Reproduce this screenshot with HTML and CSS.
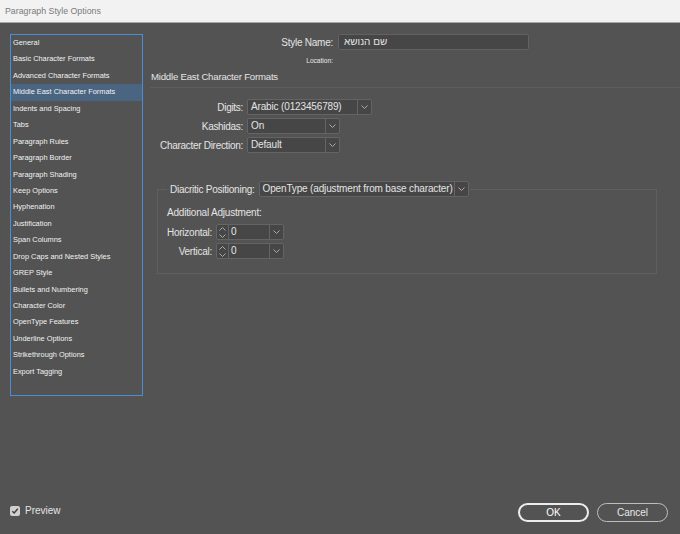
FILE: index.html
```html
<!DOCTYPE html>
<html lang="en">
<head>
  <meta charset="UTF-8">
  <title>Paragraph Style Options</title>
  <link rel="stylesheet" href="styles.css">
</head>
<body>
  <div class="titlebar">Paragraph Style Options</div>

  <div class="dialog">
    <ul class="sidebar">
      <li>General</li>
      <li>Basic Character Formats</li>
      <li>Advanced Character Formats</li>
      <li class="selected">Middle East Character Formats</li>
      <li>Indents and Spacing</li>
      <li>Tabs</li>
      <li>Paragraph Rules</li>
      <li>Paragraph Border</li>
      <li>Paragraph Shading</li>
      <li>Keep Options</li>
      <li>Hyphenation</li>
      <li>Justification</li>
      <li>Span Columns</li>
      <li>Drop Caps and Nested Styles</li>
      <li>GREP Style</li>
      <li>Bullets and Numbering</li>
      <li>Character Color</li>
      <li>OpenType Features</li>
      <li>Underline Options</li>
      <li>Strikethrough Options</li>
      <li>Export Tagging</li>
    </ul>

    <div class="panel">
      <div class="name-row">
        <span class="name-label">Style Name:</span>
        <div class="textfield" dir="rtl">שם הנושא</div>
      </div>
      <div class="location">Location:</div>

      <div class="section-title">Middle East Character Formats</div>

      <div class="fields">
        <div class="field">
          <span class="field-label">Digits:</span>
          <div class="select wide">
            <span class="select-value">Arabic (0123456789)</span>
            <span class="select-arrow"><svg width="7" height="4" viewBox="0 0 7 4"><polyline points="0.5,0.5 3.5,3.5 6.5,0.5" fill="none" stroke="#aaa" stroke-width="1"/></svg></span>
          </div>
        </div>
        <div class="field">
          <span class="field-label">Kashidas:</span>
          <div class="select">
            <span class="select-value">On</span>
            <span class="select-arrow"><svg width="7" height="4" viewBox="0 0 7 4"><polyline points="0.5,0.5 3.5,3.5 6.5,0.5" fill="none" stroke="#aaa" stroke-width="1"/></svg></span>
          </div>
        </div>
        <div class="field">
          <span class="field-label">Character Direction:</span>
          <div class="select">
            <span class="select-value">Default</span>
            <span class="select-arrow"><svg width="7" height="4" viewBox="0 0 7 4"><polyline points="0.5,0.5 3.5,3.5 6.5,0.5" fill="none" stroke="#aaa" stroke-width="1"/></svg></span>
          </div>
        </div>
      </div>

      <fieldset class="group">
        <legend class="group-legend">
          <span class="legend-label">Diacritic Positioning:</span>
          <div class="select diacritic">
            <span class="select-value">OpenType (adjustment from base character)</span>
            <span class="select-arrow"><svg width="7" height="4" viewBox="0 0 7 4"><polyline points="0.5,0.5 3.5,3.5 6.5,0.5" fill="none" stroke="#aaa" stroke-width="1"/></svg></span>
          </div>
        </legend>

        <div class="sub-title">Additional Adjustment:</div>

        <div class="spin-row">
          <span class="spin-label">Horizontal:</span>
          <div class="spinner">
            <span class="spin-arrows"><svg width="7" height="11" viewBox="0 0 7 11"><polyline points="0.5,3.5 3.5,0.5 6.5,3.5" fill="none" stroke="#aaa"/><polyline points="0.5,7.5 3.5,10.5 6.5,7.5" fill="none" stroke="#aaa"/></svg></span>
            <span class="spin-value">0</span>
            <span class="select-arrow"><svg width="7" height="4" viewBox="0 0 7 4"><polyline points="0.5,0.5 3.5,3.5 6.5,0.5" fill="none" stroke="#aaa" stroke-width="1"/></svg></span>
          </div>
        </div>
        <div class="spin-row">
          <span class="spin-label">Vertical:</span>
          <div class="spinner">
            <span class="spin-arrows"><svg width="7" height="11" viewBox="0 0 7 11"><polyline points="0.5,3.5 3.5,0.5 6.5,3.5" fill="none" stroke="#aaa"/><polyline points="0.5,7.5 3.5,10.5 6.5,7.5" fill="none" stroke="#aaa"/></svg></span>
            <span class="spin-value">0</span>
            <span class="select-arrow"><svg width="7" height="4" viewBox="0 0 7 4"><polyline points="0.5,0.5 3.5,3.5 6.5,0.5" fill="none" stroke="#aaa" stroke-width="1"/></svg></span>
          </div>
        </div>
      </fieldset>
    </div>
  </div>

  <div class="footer">
    <label class="preview">
      <span class="checkbox"><svg width="8" height="8" viewBox="0 0 8 8"><polyline points="1.3,4.2 3.2,6 6.8,1.8" fill="none" stroke="#3c3c3c" stroke-width="1.4"/></svg></span>
      Preview
    </label>
    <div class="buttons">
      <button class="btn primary">OK</button>
      <button class="btn">Cancel</button>
    </div>
  </div>
</body>
</html>
```

FILE: styles.css
```css
html, body {
  height: 100%;
}
body {
  margin: 0;
  background: #535353;
  color: #e4e4e4;
  font-family: "Liberation Sans", Arial, sans-serif;
  font-size: 10px;
  display: flex;
  flex-direction: column;
  overflow: hidden;
}
.titlebar {
  height: 22px;
  line-height: 22px;
  background: #f2f2f2;
  border-bottom: 1px solid #a9a9a9;
  color: #7a7a7a;
  font-size: 8.8px;
  padding-left: 5px;
  flex: none;
}
.dialog {
  display: flex;
  flex: 1;
  padding: 11px 0 0 10px;
}
.sidebar {
  list-style: none;
  margin: 0;
  padding: 0;
  width: 131px;
  height: 360px;
  border: 1px solid #4b8ed6;
  flex: none;
}
.sidebar li {
  height: 16.45px;
  line-height: 16.45px;
  padding-left: 2px;
  font-size: 7.4px;
  color: #f2f2f2;
  white-space: nowrap;
}
.sidebar li.selected {
  background: #4a6581;
}
.panel {
  flex: 1;
  margin-left: 7px;
}
.name-row {
  display: flex;
  align-items: center;
}
.name-label {
  width: 188px;
  text-align: right;
  padding-right: 5px;
  box-sizing: border-box;
  font-size: 10px;
  letter-spacing: -0.25px;
}
.textfield {
  width: 191px;
  height: 16px;
  box-sizing: border-box;
  background: #464646;
  border: 1px solid #626262;
  border-radius: 2px;
  line-height: 14px;
  padding: 0 5px;
  text-align: left;
  font-size: 10px;
}
.location {
  width: 188px;
  text-align: right;
  font-size: 6.6px;
  margin-top: 7px;
  padding-right: 5px;
  box-sizing: border-box;
  color: #e8e8e8;
}
.section-title {
  margin-top: 7px;
  padding: 0 0 5px 1px;
  border-bottom: 1px solid #5d5d5d;
  font-size: 9.6px;
  letter-spacing: -0.2px;
}
.fields {
  display: flex;
  flex-direction: column;
  gap: 3px;
  margin-top: 11px;
}
.field {
  display: flex;
  align-items: center;
  height: 16px;
}
.field-label {
  width: 97px;
  text-align: right;
  padding-right: 4px;
  box-sizing: border-box;
  letter-spacing: -0.3px;
}
.select {
  display: flex;
  width: 93px;
  height: 16px;
  box-sizing: border-box;
  background: #464646;
  border: 1px solid #646464;
  border-radius: 2px;
}
.select.wide {
  width: 125px;
}
.select.diacritic {
  width: 210px;
}
.select-value {
  flex: 1;
  line-height: 14px;
  padding-left: 3px;
  white-space: nowrap;
  letter-spacing: -0.15px;
}
.select-arrow {
  width: 13px;
  border-left: 1px solid #646464;
  display: flex;
  align-items: center;
  justify-content: center;
}
.group {
  margin: 28px 0 0 7px;
  width: 500px;
  height: 93px;
  box-sizing: border-box;
  border: 1px solid #5f5f5f;
  padding: 0 9px;
}
.group-legend {
  display: flex;
  align-items: center;
  padding: 0 1px 0 3px;
  margin-left: 0;
}
.legend-label {
  padding-right: 4px;
  letter-spacing: -0.25px;
}
.sub-title {
  margin-top: 10px;
  letter-spacing: -0.2px;
}
.spin-row {
  display: flex;
  align-items: center;
  margin-top: 6px;
}
.spin-row + .spin-row {
  margin-top: 3px;
}
.spin-label {
  width: 45px;
  text-align: right;
  padding-right: 4px;
  letter-spacing: -0.25px;
}
.spinner {
  display: flex;
  width: 68px;
  height: 16px;
  box-sizing: border-box;
  background: #464646;
  border: 1px solid #646464;
  border-radius: 2px;
}
.spin-arrows {
  width: 11px;
  border-right: 1px solid #646464;
  display: flex;
  align-items: center;
  justify-content: center;
}
.spin-value {
  flex: 1;
  line-height: 14px;
  padding-left: 2px;
}
.footer {
  flex: none;
  height: 30px;
  margin-bottom: 7px;
  display: flex;
  align-items: center;
  justify-content: space-between;
  padding: 0 12px 0 10px;
}
.preview {
  display: flex;
  align-items: center;
  gap: 5px;
  font-size: 10px;
  margin-top: -3px;
}
.checkbox {
  width: 10px;
  height: 10px;
  border-radius: 2px;
  background: #cfcfcf;
  display: flex;
  align-items: center;
  justify-content: center;
}
.buttons {
  display: flex;
  gap: 8px;
}
.btn {
  width: 71px;
  height: 19px;
  border-radius: 10px;
  border: 1px solid #bdbdbd;
  background: transparent;
  color: #e8e8e8;
  font-family: "Liberation Sans", Arial, sans-serif;
  font-size: 10px;
  padding: 0;
}
.btn.primary {
  border: 2px solid #ececec;
  color: #fff;
}
```
